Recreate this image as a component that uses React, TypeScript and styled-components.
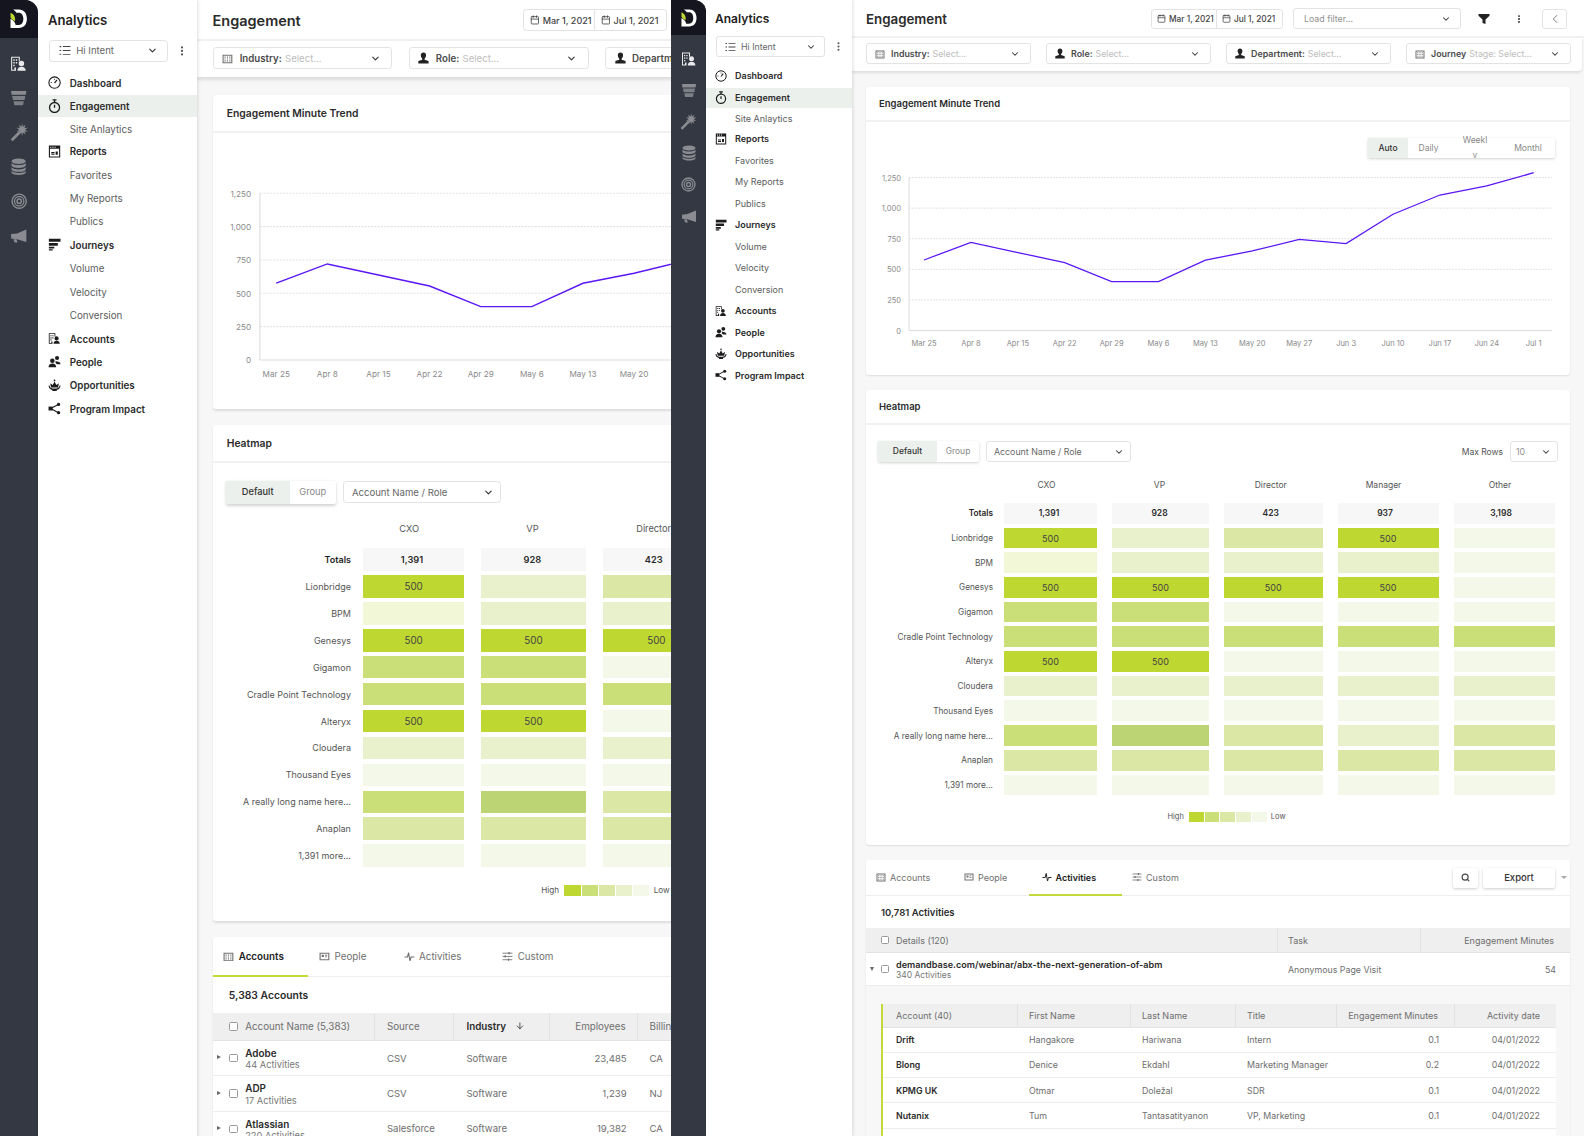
import React from "react";
import styled, { createGlobalStyle } from "styled-components";
import { Calendar, ChevronDown, ChevronLeft, EllipsisVertical, Search, ArrowDown } from "lucide-react";

const GlobalStyle = createGlobalStyle`
  html, body {
    margin: 0;
    padding: 0;
    background: #fff;
    font-family: Inter, "Liberation Sans", sans-serif;
    color: #555;
  }
  * { box-sizing: border-box; }
`;

const Page = styled.div`
  display: flex;
  width: 1584px;
  height: 1136px;
  overflow: hidden;
`;
const Viewport = styled.div<{ $width: number }>`
  flex: none;
  width: ${(p) => p.$width}px;
  height: 1136px;
  overflow: hidden;
`;
const Frame = styled.div<{ $zoom: number }>`
  zoom: ${(p) => p.$zoom};
  display: flex;
  width: 913px;
  height: 1136px;
  overflow: hidden;
  background: #fff;
`;

/* rail */
const Rail = styled.div`
  flex: none;
  width: 35px;
  height: 100%;
  background: #343843;
  border-top-right-radius: 12px;
  overflow: hidden;
  display: flex;
  flex-direction: column;
  align-items: center;
`;
const LogoBlock = styled.div`
  align-self: stretch;
  height: 35px;
  background: #14151e;
  display: flex;
  align-items: center;
  justify-content: center;
  margin-bottom: 8px;
`;
const RailIcon = styled.div<{ $on?: boolean }>`
  width: 18px;
  height: 31.5px;
  display: flex;
  align-items: center;
  justify-content: center;
  color: ${(p) => (p.$on ? "#e9e9ea" : "#8a8c92")};
`;

/* sidebar */
const Sidebar = styled.div`
  flex: none;
  width: 146px;
  height: 100%;
  background: #fff;
  box-shadow: 1px 0 3px rgba(0, 0, 0, 0.12);
  z-index: 2;
`;
const SideHead = styled.div`
  height: 36px;
  padding: 0 9px;
  display: flex;
  align-items: center;
  font-size: 12px;
  font-weight: 600;
  color: #222;
`;
const SideTools = styled.div`
  display: flex;
  align-items: center;
  padding-left: 10px;
  height: 21px;
  color: #555;
`;
const DotsSlot = styled.div`
  width: 26px;
  display: flex;
  justify-content: center;
  color: #555;
`;
const Nav = styled.div`
  margin-top: 8px;
  display: flex;
  flex-direction: column;
`;
const NavRow = styled.div<{ $active?: boolean; $child?: boolean; $tight?: boolean }>`
  display: flex;
  align-items: center;
  height: ${(p) => (p.$active ? 20 : 21.5)}px;
  margin-top: ${(p) => (p.$active ? 1 : 0)}px;
  margin-bottom: ${(p) => (p.$tight ? -1.5 : p.$active ? 0.5 : 0)}px;
  padding-left: ${(p) => (p.$child ? 29 : 9)}px;
  background: ${(p) => (p.$active ? "#ecf0ec" : "transparent")};
  font-size: 9px;
  font-weight: ${(p) => (p.$child ? 400 : 600)};
  color: ${(p) => (p.$child ? "#5c5c5c" : "#2b2b2b")};
`;
const NavIcon = styled.div`
  width: 12px;
  height: 12px;
  margin-right: 8px;
  display: flex;
  align-items: center;
  justify-content: center;
  color: #1c1c1c;
`;

/* main */
const Main = styled.div`
  flex: 1;
  min-width: 0;
  height: 100%;
  background: #f7f7f7;
  display: flex;
  flex-direction: column;
`;
const TopBar = styled.div`
  flex: none;
  height: 38px;
  background: #fff;
  border-bottom: 2px solid #f1f1f1;
  display: flex;
  align-items: center;
  padding: 1px 0 0 14px;
`;
const PageTitle = styled.div`
  font-size: 13.3px;
  font-weight: 600;
  color: #2b2b2b;
  margin-right: auto;
`;
const DateRange = styled.div`
  display: flex;
  width: 132px;
  height: 20px;
  border: 1px solid #e3e3e3;
  border-radius: 3px;
  margin-right: 10px;
`;
const DatePart = styled.div<{ $width: number }>`
  width: ${(p) => p.$width}px;
  display: flex;
  align-items: center;
  gap: 3px;
  padding-left: 5px;
  font-size: 8.3px;
  font-weight: 500;
  color: #444;
  & + & {
    border-left: 1px solid #e3e3e3;
  }
`;
const ToolSlot = styled.div<{ $width: number }>`
  width: ${(p) => p.$width}px;
  display: flex;
  justify-content: center;
  color: #222;
`;
const BackButton = styled.div`
  width: 25px;
  height: 20px;
  margin: 0 17px 0 11px;
  border: 1px solid #e3e3e3;
  border-radius: 3px;
  display: flex;
  align-items: center;
  justify-content: center;
  color: #555;
`;
const FilterBar = styled.div`
  flex: none;
  height: 33px;
  background: #fff;
  display: flex;
  align-items: center;
  gap: 15px;
  padding: 0 0 2px 14px;
  box-shadow: 0 2px 3px rgba(0, 0, 0, 0.1);
  border-bottom-right-radius: 4px;
  margin-right: 2px;
  z-index: 1;
`;
const SelectBox = styled.div<{ $width: number; $left?: number; $right?: number }>`
  flex: none;
  width: ${(p) => p.$width}px;
  height: 20.5px;
  border: 1px solid #e3e3e3;
  border-radius: 3px;
  background: #fff;
  display: flex;
  align-items: center;
  padding: 0 ${(p) => p.$right ?? 5}px 0 ${(p) => p.$left ?? 8}px;
  font-size: 8.8px;
  color: #aaa;
  white-space: nowrap;
  overflow: hidden;
`;
const SelectLabel = styled.span`
  font-weight: 600;
  font-size: 8.9px;
  color: #4a4a4a;
  margin: 0 3px 0 6px;
`;
const SelectText = styled.span<{ $dark?: boolean; $gap?: number }>`
  flex: 1;
  margin-left: ${(p) => p.$gap ?? 0}px;
  color: ${(p) => (p.$dark ? "#666" : "#909090")};
`;
const Placeholder = styled.span`
  flex: 1;
  color: #bdbdbd;
`;
const Content = styled.div`
  flex: 1;
  padding: 16px 14px 0;
  display: flex;
  flex-direction: column;
  gap: 15px;
  overflow: hidden;
`;
const Card = styled.div<{ $height?: number }>`
  flex: none;
  width: 704px;
  height: ${(p) => (p.$height ? p.$height + "px" : "auto")};
  background: #fff;
  border-radius: 3px;
  box-shadow: 0 1px 2px rgba(0, 0, 0, 0.1);
`;
const CardHead = styled.div`
  height: 35px;
  padding-left: 13px;
  display: flex;
  align-items: center;
  border-bottom: 2px solid #f1f1f1;
  font-size: 9.5px;
  font-weight: 600;
  color: #2b2b2b;
`;

/* chart */
const ChartTools = styled.div`
  display: flex;
  justify-content: flex-end;
  padding: 16px 15px 0 0;
`;
const Segments = styled.div`
  display: flex;
  height: 20px;
  border-radius: 2px;
  background: #fff;
  box-shadow: 0 1px 3px rgba(0, 0, 0, 0.18);
`;
const Segment = styled.div<{ $width: number; $active?: boolean; $inset?: number; $lifted?: boolean }>`
  width: ${(p) => p.$width}px;
  height: ${(p) => (p.$lifted ? "25px" : "100%")};
  margin-top: ${(p) => (p.$lifted ? "-5px" : "0")};
  padding: 0 ${(p) => p.$inset ?? 0}px;
  overflow: hidden;
  text-align: center;
  font-size: 8.5px;
  line-height: ${(p) => (p.$lifted ? "15px" : "20px")};
  word-break: break-all;
  background: ${(p) => (p.$active ? "#ecf0ec" : "transparent")};
  color: ${(p) => (p.$active ? "#333" : "#888")};
  font-weight: ${(p) => (p.$active ? 500 : 400)};
`;
const ChartSvg = styled.svg`
  display: block;
  font-size: 7.5px;
  fill: #8a8a8a;
`;

/* heatmap */
const HeatTools = styled.div`
  display: flex;
  align-items: center;
  padding: 16px 12px 0 12px;
`;
const Toggle = styled(Segments)`
  height: 21px;
  margin-right: 7px;
`;
const RowsLabel = styled.div`
  margin-left: auto;
  margin-right: 7px;
  font-size: 8.5px;
  color: #555;
`;
const HeatGrid = styled.div`
  display: grid;
  grid-template-columns: 123px 93px 97px 98.5px 101px 101px;
  grid-auto-rows: 20.7px;
  column-gap: 15px;
  row-gap: 4px;
  margin-top: 16.3px;
`;
const HeatHead = styled.div<{ $nudge: number }>`
  font-size: 8.5px;
  color: #555;
  display: flex;
  align-items: center;
  justify-content: center;
  margin-top: -7px;
  padding-right: ${(p) => p.$nudge * 2}px;
`;
const HeatLabel = styled.div<{ $strong?: boolean }>`
  margin-right: -4px;
  display: flex;
  align-items: center;
  justify-content: flex-end;
  font-size: 8.25px;
  white-space: nowrap;
  font-weight: ${(p) => (p.$strong ? 600 : 400)};
  color: ${(p) => (p.$strong ? "#222" : "#555")};
`;
const TotalCell = styled.div<{ $nudge: number }>`
  background: #f7f7f7;
  display: flex;
  align-items: center;
  justify-content: center;
  padding-right: ${(p) => p.$nudge * 2}px;
  font-size: 8.5px;
  font-weight: 600;
  color: #2b2b2b;
`;
const HEAT = ["#f4f8e9", "#f1f7d7", "#e8f1cc", "#dbe8a5", "#cbdf78", "#bcd474", "#bfd731"];
const HeatCell = styled.div<{ $level: number }>`
  background: ${(p) => HEAT[p.$level]};
  display: flex;
  align-items: center;
  justify-content: center;
  font-size: 9px;
  color: #444;
`;
const Legend = styled.div`
  display: flex;
  align-items: center;
  justify-content: center;
  gap: 4px;
  margin: 15.6px 0 0 17px;
  height: 12px;
  font-size: 7.5px;
  color: #555;
`;
const LegendBar = styled.div`
  display: flex;
  gap: 1px;
  margin: 0 0 0 1px;
`;
const LegendSwatch = styled.div<{ $level: number }>`
  width: 14.8px;
  height: 10px;
  background: ${(p) => HEAT[p.$level]};
`;

/* tables */
const TabBar = styled.div`
  height: 36px;
  display: flex;
  align-items: stretch;
  border-bottom: 1px solid #eee;
`;
const Tab = styled.div<{ $width: number; $active?: boolean; $inset?: number }>`
  width: ${(p) => p.$width}px;
  display: flex;
  align-items: center;
  gap: 4px;
  padding-left: ${(p) => p.$inset ?? 10}px;
  margin-bottom: -1px;
  border-bottom: 2px solid ${(p) => (p.$active ? "#c3da3a" : "transparent")};
  font-size: 9px;
  font-weight: ${(p) => (p.$active ? 600 : 400)};
  color: ${(p) => (p.$active ? "#222" : "#707070")};
`;
const TabTools = styled.div`
  margin-left: auto;
  display: flex;
  align-items: center;
  gap: 5px;
  padding-right: 3px;
`;
const FlatButton = styled.div<{ $width: number }>`
  width: ${(p) => p.$width}px;
  height: 20px;
  display: flex;
  align-items: center;
  justify-content: center;
  border-radius: 2px;
  background: #fff;
  box-shadow: 0 1px 3px rgba(0, 0, 0, 0.2);
  font-size: 9.5px;
  font-weight: 500;
  color: #333;
`;
const MoreCaret = styled.div`
  width: 0;
  height: 0;
  margin-left: 1px;
  border-left: 3px solid transparent;
  border-right: 3px solid transparent;
  border-top: 3px solid #aaa;
`;
const CountRow = styled.div<{ $height: number }>`
  height: ${(p) => p.$height}px;
  padding-left: 15px;
  display: flex;
  align-items: center;
  font-size: 9.5px;
  font-weight: 600;
  color: #2b2b2b;
`;
const GridRow = styled.div<{ $cols: string; $height: number; $head?: boolean }>`
  display: grid;
  grid-template-columns: ${(p) => p.$cols};
  height: ${(p) => p.$height}px;
  background: ${(p) => (p.$head ? "#efefef" : "#fff")};
  border-bottom: ${(p) => (p.$head ? "1px solid #e3e3e3" : "1.5px solid #ededed")};
  font-size: ${(p) => (p.$head ? 9 : 8.8)}px;
  color: #6e6e6e;
`;
const Cell = styled.div<{ $right?: boolean; $head?: boolean; $strong?: boolean; $pad?: number }>`
  min-width: 0;
  display: flex;
  align-items: center;
  gap: 5px;
  white-space: nowrap;
  overflow: hidden;
  justify-content: ${(p) => (p.$right ? "flex-end" : "flex-start")};
  padding: 0 ${(p) => p.$pad ?? 10}px 0 ${(p) => p.$pad ?? 11}px;
  border-right: ${(p) => (p.$head ? "1px solid #e2e2e2" : "none")};
  font-weight: ${(p) => (p.$strong ? 600 : 400)};
  color: ${(p) => (p.$strong ? "#2b2b2b" : "inherit")};
  &:last-child {
    border-right: none;
  }
`;
const NameCell = styled.div<{ $head?: boolean }>`
  display: flex;
  align-items: center;
  min-width: 0;
  padding-left: 15px;
  position: relative;
  overflow: hidden;
  white-space: nowrap;
  border-right: ${(p) => (p.$head ? "1px solid #e2e2e2" : "none")};
`;
const RowCaret = styled.div<{ $open?: boolean }>`
  position: absolute;
  left: 4px;
  top: 50%;
  margin-top: -2.5px;
  width: 0;
  height: 0;
  ${(p) =>
    p.$open
      ? "border-left: 2.5px solid transparent; border-right: 2.5px solid transparent; border-top: 4px solid #666;"
      : "border-top: 2.5px solid transparent; border-bottom: 2.5px solid transparent; border-left: 4px solid #666;"}
`;
const CheckBox = styled.div`
  flex: none;
  width: 8px;
  height: 8px;
  margin-right: 7px;
  border: 1px solid #999;
  border-radius: 1.5px;
  background: #fff;
`;
const NameStack = styled.div`
  display: flex;
  flex-direction: column;
  line-height: 11.5px;
  padding-top: 2.5px;
`;
const NameMain = styled.span`
  font-size: 9.1px;
  font-weight: 600;
  color: #2b2b2b;
`;
const NameSub = styled.span`
  font-size: 8.5px;
  color: #777;
`;
const Expanded = styled.div`
  background: #f7f7f7;
  padding: 17.5px 14px 0 15px;
`;
const Nested = styled.div`
  border-left: 2px solid #c3da3a;
`;

const Glyph = styled.svg`
  display: block;
  flex: none;
  fill: currentColor;
`;

/* drawn icons */
const Logo = () => (
  <Glyph width="16" height="18" viewBox="0 0 17 19" style={{ color: "#fff" }}>
    <path d="M3 .5H8.500C13.500.5 16.500 4 16.500 9.500S13.500 18.500 8.500 18.500H.5V9.500C3.500 11 5 13 5.500 15.500H8.500C11.500 15.500 13 13 13 9.500S11.500 3.500 8.500 3.500H6.200C5.500 2.500 4.500 1.300 3 .5Z" />
    <path d="M.5 3.500C3 4.500 5 6.500 5 10 5 11 4.900 11.500 4.700 12 3 10.500 .5 9.500 .5 8Z" fill="#bfd731" />
  </Glyph>
);
const BuildingPersonIcon = ({ size = 16 }: { size?: number }) => (
  <Glyph width={size} height={size} viewBox="0 0 16 16">
    <path d="M1 1.500h8v4.200H8V2.500H2v11h2v-2h1.500v3H1z" />
    <path d="M3 4h1.300v1.300H3zM5.300 4h1.300v1.300H5.300zM3 6.500h1.300v1.300H3zM5.300 6.500h1.300v1.300H5.300zM3 9h1.300v1.300H3z" />
    <circle cx="10.500" cy="7.800" r="2.500" />
    <path d="M6.800 14.500c0-2.600 1.500-3.800 3.700-3.800s3.900 1.200 3.900 3.800z" />
  </Glyph>
);
const FunnelIcon = () => (
  <Glyph width="16" height="15" viewBox="0 0 16 15">
    <path d="M1 1h14l-.5 3.400h-13z" />
    <path d="M2 5.500h12l-.7 3.700H2.700z" opacity=".85" />
    <path d="M3.300 10.300h9.400l-.8 3.700H4.100z" opacity=".85" />
  </Glyph>
);
const WandIcon = () => (
  <Glyph width="17" height="17" viewBox="0 0 16 16">
    <path d="M.6 14 7.500 7.100l1.700 1.700-6.900 6.900z" />
    <path d="M10.500.5l.7 2.800 2.300-1.700-1 2.700 2.900-.1-2.500 1.600 2.500 1.600-2.900-.1 1 2.700-2.300-1.700-.7 2.800-.7-2.800-2.300 1.700 1-2.700-2.900.1 2.500-1.600-2.500-1.600 2.900.1-1-2.700 2.300 1.700z" />
  </Glyph>
);
const DatabaseIcon = () => (
  <Glyph width="14" height="16" viewBox="0 0 14 16">
    <ellipse cx="7" cy="3" rx="6.500" ry="2.600" />
    <path d="M.5 4.500C1.700 6 4.100 6.500 7 6.500s5.300-.5 6.500-2v2.600c-1 1.500-3.500 2-6.500 2s-5.500-.5-6.500-2z" />
    <path d="M.5 8.500c1.200 1.500 3.600 2 6.500 2s5.300-.5 6.500-2v2.200c-1 1.500-3.500 2-6.500 2s-5.500-.5-6.500-2z" />
    <path d="M.5 12c1.200 1.300 3.600 1.800 6.500 1.800s5.300-.5 6.500-1.800v1.500c-1 1.500-3.500 2-6.500 2s-5.500-.5-6.500-2z" />
  </Glyph>
);
const TargetIcon = () => (
  <Glyph width="15" height="15" viewBox="0 0 15 15" style={{ fill: "none", stroke: "currentColor" }}>
    <circle cx="7.500" cy="7.500" r="6.500" strokeWidth="1.300" />
    <circle cx="7.500" cy="7.500" r="4.300" strokeWidth="1.200" />
    <circle cx="7.500" cy="7.500" r="2" strokeWidth="1.300" />
  </Glyph>
);
const MegaphoneIcon = () => (
  <Glyph width="16" height="13" viewBox="0 0 16 13">
    <path d="M15 .5v11.500L6.500 9.300 1 8.800V4.700l5.500-.6z" />
    <path d="M3 9.500h3l.8 3H4.300z" />
  </Glyph>
);
const GaugeIcon = () => (
  <Glyph width="12" height="12" viewBox="0 0 12 12" style={{ fill: "none", stroke: "currentColor" }}>
    <circle cx="6" cy="6" r="5.200" strokeWidth="1" />
    <path d="M6 6.500 8.200 3.600" strokeWidth="1.100" />
    <path d="M2.500 6h1M6 2.500v1" strokeWidth=".8" />
  </Glyph>
);
const StopwatchIcon = () => (
  <Glyph width="12" height="13" viewBox="0 0 12 13" style={{ fill: "none", stroke: "currentColor" }}>
    <circle cx="6" cy="7.800" r="4.600" strokeWidth="1.200" />
    <path d="M4.200.8h3.600M6 .8v2.400M6 5.300v2.800" strokeWidth="1.200" />
  </Glyph>
);
const ReportIcon = () => (
  <Glyph width="12" height="12" viewBox="0 0 12 12">
    <path d="M.8.500h10.400v11H.8zm1 3v7h8.400v-7z" />
    <path d="M2 1.500h1v1H2zM4 1.500h1v1H4zM6 1.500h1v1H6z" fill="#fff" />
    <path d="M3 6.500h3v1H3zM3 8h3v1H3zM7 6h2v3H7z" />
  </Glyph>
);
const JourneyIcon = () => (
  <Glyph width="12" height="12" viewBox="0 0 12 12">
    <path d="M.8.800h10.700v2.600H.8zM.8 4.500h8.200v2.500H.8zM.8 8h5v1.700H.8zM.8 10.300h3.500v1.200H.8z" />
  </Glyph>
);
const PeopleIcon = () => (
  <Glyph width="12" height="12" viewBox="0 0 12 12">
    <circle cx="4" cy="5.300" r="2.100" />
    <path d="M.5 11.200c0-2.300 1.300-3.500 3.500-3.500s3.500 1.200 3.500 3.500z" />
    <circle cx="8.300" cy="2.800" r="1.900" />
    <path d="M6.800 5.200c.5.500 1 .7 1.500.7 1.900 0 3.200.8 3.200 2.700H8.200c-.4-.6-1-1-1.500-1.200.4-.5.400-1.400.1-2.200z" />
  </Glyph>
);
const CrownIcon = () => (
  <Glyph width="12" height="12" viewBox="0 0 12 12">
    <path d="M2.800 7.800 2 3.800l2.300 1.600L6 2.300l1.700 3.100L10 3.800l-.8 4z" />
    <circle cx="6" cy="1.300" r=".8" />
    <path d="M.5 6h.9c.3 2 1.600 2.800 4.600 2.800S10.300 8 10.600 6h.9c-.2 2.600-1.500 3.700-3.500 4v1h-4v-1C2 9.700.7 8.600.5 6z" />
  </Glyph>
);
const ShareIcon = () => (
  <Glyph width="12" height="12" viewBox="0 0 12 12" style={{ stroke: "currentColor" }}>
    <path d="M2.500 6 9.500 2.200M2.500 6l7 3.800" fill="none" strokeWidth="1" />
    <rect x=".5" y="4.200" width="3.800" height="3.600" stroke="none" />
    <circle cx="9.700" cy="2.200" r="1.500" stroke="none" />
    <circle cx="9.700" cy="9.800" r="1.500" stroke="none" />
  </Glyph>
);
const ListIcon = () => (
  <Glyph width="11" height="10" viewBox="0 0 11 10" style={{ color: "#444" }}>
    <path d="M.5 1h1.500v1H.5zM.5 4.500h1.500v1H.5zM.5 8h1.500v1H.5zM3.500 1H10.500v.8H3.500zM3.500 4.600H10.500v.8H3.500zM3.500 8.200H10.500V9H3.500z" />
  </Glyph>
);
const TableIcon = ({ size = 10 }: { size?: number }) => (
  <Glyph width={size} height={size} viewBox="0 0 10 10" style={{ color: "#707070" }}>
    <path d="M.5 1.500h9v8h-9zm1 1v6h7v-6z" />
    <path d="M2.300 3.300h1v1h-1zM4.500 3.300h1v1h-1zM6.700 3.300h1v1h-1zM2.300 5h1v1h-1zM4.500 5h1v1h-1zM6.700 5h1v1h-1zM2.300 6.700h1v1h-1zM4.500 6.700h1v1h-1zM6.700 6.700h1v1h-1z" />
  </Glyph>
);
const UserIcon = () => (
  <Glyph width="10" height="11" viewBox="0 0 10 11" style={{ color: "#222" }}>
    <path d="M5 .5c1.500 0 2.400 1 2.400 2.500 0 1.300-.6 2.500-1.300 3v1l3.600 1.300v2.200H.3V8.300L3.900 7V6C3.200 5.500 2.600 4.300 2.600 3 2.600 1.500 3.500.5 5 .5z" />
  </Glyph>
);
const IdCardIcon = () => (
  <Glyph width="10" height="10" viewBox="0 0 10 10" style={{ color: "#707070" }}>
    <path d="M.5 1.500h9v7h-9zm1 1v5h7v-5z" />
    <path d="M2.500 3.500h2v2h-2zM5.500 3.500h2v.8h-2zM5.500 5h2v.8h-2z" />
  </Glyph>
);
const PulseIcon = () => (
  <Glyph width="10" height="10" viewBox="0 0 10 10" style={{ fill: "none", stroke: "currentColor" }}>
    <path d="M.5 5.500h2.700l1-4 1.300 7.500 1-3.500h3" strokeWidth="1" />
  </Glyph>
);
const SlidersIcon = () => (
  <Glyph width="10" height="10" viewBox="0 0 10 10" style={{ fill: "none", stroke: "currentColor" }}>
    <path d="M.5 2h9M.5 5h9M.5 8h9" strokeWidth=".8" />
    <path d="M6.500 1v2M3 4v2M6 7v2" strokeWidth="1.200" />
  </Glyph>
);
const FunnelSolid = () => (
  <Glyph width="12" height="12" viewBox="0 0 12 12">
    <path d="M.5 1h11v1.700L7.500 6.500V11l-3-1V6.500L.5 2.700z" />
  </Glyph>
);

const railIcons = [<BuildingPersonIcon />, <FunnelIcon />, <WandIcon />, <DatabaseIcon />, <TargetIcon />, <MegaphoneIcon />];

type NavItem = { label: string; icon?: React.ReactNode; active?: boolean; tight?: boolean };
const navItems: NavItem[] = [
  { label: "Dashboard", icon: <GaugeIcon /> },
  { label: "Engagement", icon: <StopwatchIcon />, active: true },
  { label: "Site Anlaytics", tight: true },
  { label: "Reports", icon: <ReportIcon /> },
  { label: "Favorites" },
  { label: "My Reports" },
  { label: "Publics" },
  { label: "Journeys", icon: <JourneyIcon /> },
  { label: "Volume" },
  { label: "Velocity" },
  { label: "Conversion" },
  { label: "Accounts", icon: <BuildingPersonIcon size={12} /> },
  { label: "People", icon: <PeopleIcon /> },
  { label: "Opportunities", icon: <CrownIcon /> },
  { label: "Program Impact", icon: <ShareIcon /> },
];

const xLabels = ["Mar 25", "Apr 8", "Apr 15", "Apr 22", "Apr 29", "May 6", "May 13", "May 20", "May 27", "Jun 3", "Jun 10", "Jun 17", "Jun 24", "Jul 1"];
const trend = [576, 720, 637, 555, 400, 400, 575, 650, 744, 710, 950, 1107, 1181, 1289];

const heatColumns = [
  { name: "CXO", total: "1,391", headNudge: 4, totalNudge: 1.5 },
  { name: "VP", total: "928", headNudge: 1, totalNudge: 1 },
  { name: "Director", total: "423", headNudge: 2.5, totalNudge: 2.5 },
  { name: "Manager", total: "937", headNudge: 4.5, totalNudge: 3 },
  { name: "Other", total: "3,198", headNudge: 4, totalNudge: 3 },
];
// level 6 carries the 500 label
const heatRows: { name: string; cells: number[] }[] = [
  { name: "Lionbridge", cells: [6, 2, 3, 6, 0] },
  { name: "BPM", cells: [1, 2, 2, 2, 0] },
  { name: "Genesys", cells: [6, 6, 6, 6, 0] },
  { name: "Gigamon", cells: [4, 4, 0, 0, 0] },
  { name: "Cradle Point Technology", cells: [4, 4, 4, 4, 4] },
  { name: "Alteryx", cells: [6, 6, 0, 0, 0] },
  { name: "Cloudera", cells: [2, 2, 2, 2, 2] },
  { name: "Thousand Eyes", cells: [0, 0, 0, 0, 0] },
  { name: "A really long name here...", cells: [4, 5, 3, 2, 3] },
  { name: "Anaplan", cells: [3, 3, 3, 3, 3] },
  { name: "1,391 more...", cells: [0, 0, 0, 0, 0] },
];

const accountRows = [
  ["Adobe", "44 Activities", "CSV", "Software", "23,485", "CA"],
  ["ADP", "17 Activities", "CSV", "Software", "1,239", "NJ"],
  ["Atlassian", "220 Activities", "Salesforce", "Software", "19,382", "CA"],
];
const activityRows = [
  ["Drift", "Hangakore", "Hariwana", "Intern", "0.1", "04/01/2022"],
  ["Blong", "Denice", "Ekdahl", "Marketing Manager", "0.2", "04/01/2022"],
  ["KPMG UK", "Otmar", "Doležal", "SDR", "0.1", "04/01/2022"],
  ["Nutanix", "Tum", "Tantasatityanon", "VP, Marketing", "0.1", "04/01/2022"],
];

const ACCOUNT_COLS = "149px 73px 88px 80px 314px";
const DETAIL_COLS = "412px 143px 149px";
const NESTED_COLS = "135px 113px 105px 101px 118px 101px";

function TrendChart() {
  const x0 = 58;
  const step = 46.9;
  const yFor = (v: number) => 172.5 - v * 0.1224;
  const points = trend.map((v, i) => `${x0 + i * step},${yFor(v)}`).join(" ");
  return (
    <ChartSvg width="704" height="217" viewBox="0 0 704 217">
      {[250, 500, 750, 1000, 1250].map((v) => (
        <line key={v} x1="43" x2="686" y1={yFor(v)} y2={yFor(v)} stroke="#e3e3e3" strokeWidth="1" strokeDasharray="2 1" />
      ))}
      <line x1="43" x2="43" y1={yFor(1250)} y2={yFor(0)} stroke="#dcdcdc" />
      <line x1="43" x2="686" y1={yFor(0)} y2={yFor(0)} stroke="#dcdcdc" />
      {[0, 250, 500, 750, 1000, 1250].map((v) => (
        <text key={v} x="35" y={yFor(v) + 3} textAnchor="end">
          {v.toLocaleString("en-US")}
        </text>
      ))}
      {xLabels.map((l, i) => (
        <text key={l} x={x0 + i * step} y="188" textAnchor="middle">
          {l}
        </text>
      ))}
      <polyline points={points} fill="none" stroke="#5b16f5" strokeWidth="1.3" />
    </ChartSvg>
  );
}

function Heatmap() {
  return (
    <Card $height={455}>
      <CardHead>Heatmap</CardHead>
      <HeatTools>
        <Toggle>
          <Segment $width={59} $active>Default</Segment>
          <Segment $width={42}>Group</Segment>
        </Toggle>
        <SelectBox $width={145} $left={7} $right={6}>
          <SelectText $dark>Account Name / Role</SelectText>
          <ChevronDown size={10} color="#333" strokeWidth={2.5} />
        </SelectBox>
        <RowsLabel>Max Rows</RowsLabel>
        <SelectBox $width={48} $left={5} $right={6}>
          <SelectText>10</SelectText>
          <ChevronDown size={10} color="#333" strokeWidth={2.5} />
        </SelectBox>
      </HeatTools>
      <HeatGrid>
        <span />
        {heatColumns.map((c) => (
          <HeatHead key={c.name} $nudge={c.headNudge}>{c.name}</HeatHead>
        ))}
        <HeatLabel $strong>Totals</HeatLabel>
        {heatColumns.map((c) => (
          <TotalCell key={c.name} $nudge={c.totalNudge}>{c.total}</TotalCell>
        ))}
        {heatRows.map((row) => (
          <React.Fragment key={row.name}>
            <HeatLabel>{row.name}</HeatLabel>
            {row.cells.map((level, i) => (
              <HeatCell key={i} $level={level}>
                {level === 6 ? "500" : ""}
              </HeatCell>
            ))}
          </React.Fragment>
        ))}
      </HeatGrid>
      <Legend>
        High
        <LegendBar>
          {[6, 4, 3, 2, 0].map((l) => (
            <LegendSwatch key={l} $level={l} />
          ))}
        </LegendBar>
        Low
      </Legend>
    </Card>
  );
}

function AccountsTable() {
  return (
    <>
      <CountRow $height={33}>5,383 Accounts</CountRow>
      <GridRow $cols={ACCOUNT_COLS} $height={26} $head>
        <NameCell $head>
          <CheckBox />
          Account Name (5,383)
        </NameCell>
        <Cell $head>Source</Cell>
        <Cell $head $strong>
          Industry <ArrowDown size={9} color="#333" style={{ marginLeft: 3 }} />
        </Cell>
        <Cell $head $right>Employees</Cell>
        <Cell $head>Billing</Cell>
      </GridRow>
      {accountRows.map((r) => (
        <GridRow key={r[0]} $cols={ACCOUNT_COLS} $height={32.5}>
          <NameCell>
            <RowCaret />
            <CheckBox />
            <NameStack>
              <NameMain>{r[0]}</NameMain>
              <NameSub>{r[1]}</NameSub>
            </NameStack>
          </NameCell>
          <Cell>{r[2]}</Cell>
          <Cell>{r[3]}</Cell>
          <Cell $right>{r[4]}</Cell>
          <Cell>{r[5]}</Cell>
        </GridRow>
      ))}
    </>
  );
}

function ActivitiesTable() {
  return (
    <>
      <CountRow $height={32}>10,781 Activities</CountRow>
      <GridRow $cols={DETAIL_COLS} $height={25} $head>
        <NameCell $head>
          <CheckBox />
          Details (120)
        </NameCell>
        <Cell $head $pad={10}>Task</Cell>
        <Cell $head $right $pad={16}>Engagement Minutes</Cell>
      </GridRow>
      <GridRow $cols={DETAIL_COLS} $height={33}>
        <NameCell>
          <RowCaret $open />
          <CheckBox />
          <NameStack>
            <NameMain>demandbase.com/webinar/abx-the-next-generation-of-abm</NameMain>
            <NameSub>340 Activities</NameSub>
          </NameStack>
        </NameCell>
        <Cell $pad={10}>Anonymous Page Visit</Cell>
        <Cell $right $pad={14}>54</Cell>
      </GridRow>
      <Expanded>
        <Nested>
          <GridRow $cols={NESTED_COLS} $height={24} $head>
            <Cell $head $pad={13}>Account (40)</Cell>
            <Cell $head>First Name</Cell>
            <Cell $head>Last Name</Cell>
            <Cell $head>Title</Cell>
            <Cell $head $right $pad={16}>Engagement Minutes</Cell>
            <Cell $head $right $pad={16}>Activity date</Cell>
          </GridRow>
          {activityRows.map((r) => (
            <GridRow key={r[0]} $cols={NESTED_COLS} $height={25.3}>
              <Cell $strong $pad={13}>{r[0]}</Cell>
              <Cell>{r[1]}</Cell>
              <Cell>{r[2]}</Cell>
              <Cell>{r[3]}</Cell>
              <Cell $right $pad={16}>{r[4]}</Cell>
              <Cell $right $pad={16}>{r[5]}</Cell>
            </GridRow>
          ))}
          <GridRow $cols={NESTED_COLS} $height={25.3} />
        </Nested>
      </Expanded>
    </>
  );
}

function FilterSelect({ icon, label, hint }: { icon: React.ReactNode; label: string; hint: string }) {
  return (
    <SelectBox $width={165} $right={10}>
      {icon}
      <SelectLabel>{label}</SelectLabel>
      <Placeholder>{hint}</Placeholder>
      <ChevronDown size={10} color="#333" strokeWidth={2.5} />
    </SelectBox>
  );
}

function AnalyticsApp({ zoom, tab }: { zoom: number; tab: "Accounts" | "Activities" }) {
  return (
    <Frame $zoom={zoom}>
      <Rail>
        <LogoBlock>
          <Logo />
        </LogoBlock>
        {railIcons.map((icon, i) => (
          <RailIcon key={i} $on={i === 0}>
            {icon}
          </RailIcon>
        ))}
      </Rail>
      <Sidebar>
        <SideHead>Analytics</SideHead>
        <SideTools>
          <SelectBox $width={109}>
            <ListIcon />
            <SelectText $dark $gap={5}>Hi Intent</SelectText>
            <ChevronDown size={10} color="#333" strokeWidth={2.5} style={{ marginRight: 3 }} />
          </SelectBox>
          <DotsSlot>
            <EllipsisVertical size={11} strokeWidth={2.5} />
          </DotsSlot>
        </SideTools>
        <Nav>
          {navItems.map((item) => (
            <NavRow key={item.label} $active={item.active} $child={!item.icon} $tight={item.tight}>
              {item.icon && <NavIcon>{item.icon}</NavIcon>}
              {item.label}
            </NavRow>
          ))}
        </Nav>
      </Sidebar>
      <Main>
        <TopBar>
          <PageTitle>Engagement</PageTitle>
          <DateRange>
            <DatePart $width={65}>
              <Calendar size={9} /> Mar 1, 2021
            </DatePart>
            <DatePart $width={67}>
              <Calendar size={9} /> Jul 1, 2021
            </DatePart>
          </DateRange>
          <SelectBox $width={168} $left={10} $right={9}>
            <SelectText>Load filter...</SelectText>
            <ChevronDown size={10} color="#333" strokeWidth={2.5} />
          </SelectBox>
          <ToolSlot $width={46}>
            <FunnelSolid />
          </ToolSlot>
          <ToolSlot $width={24}>
            <EllipsisVertical size={10} strokeWidth={2.5} />
          </ToolSlot>
          <BackButton>
            <ChevronLeft size={14} strokeWidth={1.3} />
          </BackButton>
        </TopBar>
        <FilterBar>
          <FilterSelect icon={<TableIcon />} label="Industry:" hint="Select..." />
          <FilterSelect icon={<UserIcon />} label="Role:" hint="Select..." />
          <FilterSelect icon={<UserIcon />} label="Department:" hint="Select..." />
          <FilterSelect icon={<TableIcon />} label="Journey" hint="Stage: Select..." />
        </FilterBar>
        <Content>
          <Card $height={288}>
            <CardHead>Engagement Minute Trend</CardHead>
            <ChartTools>
              <Segments>
                <Segment $width={40} $active>Auto</Segment>
                <Segment $width={41}>Daily</Segment>
                <Segment $width={52} $inset={12.5} $lifted>Weekly</Segment>
                <Segment $width={54} $inset={11.5}>Monthly</Segment>
              </Segments>
            </ChartTools>
            <TrendChart />
          </Card>
          <Heatmap />
          <Card>
            <TabBar>
              <Tab $width={88} $active={tab === "Accounts"}>
                <TableIcon /> Accounts
              </Tab>
              <Tab $width={74.5}>
                <IdCardIcon /> People
              </Tab>
              <Tab $width={93.5} $inset={13} $active={tab === "Activities"}>
                <PulseIcon /> Activities
              </Tab>
              <Tab $width={100}>
                <SlidersIcon /> Custom
              </Tab>
              <TabTools>
                <FlatButton $width={25}>
                  <Search size={9} color="#444" strokeWidth={3} />
                </FlatButton>
                <FlatButton $width={72}>Export</FlatButton>
                <MoreCaret />
              </TabTools>
            </TabBar>
            {tab === "Accounts" ? <AccountsTable /> : <ActivitiesTable />}
          </Card>
        </Content>
      </Main>
    </Frame>
  );
}

export default function App() {
  return (
    <Page>
      <GlobalStyle />
      <Viewport $width={671}>
        <AnalyticsApp zoom={1.09} tab="Accounts" />
      </Viewport>
      <Viewport $width={913}>
        <AnalyticsApp zoom={1} tab="Activities" />
      </Viewport>
    </Page>
  );
}
